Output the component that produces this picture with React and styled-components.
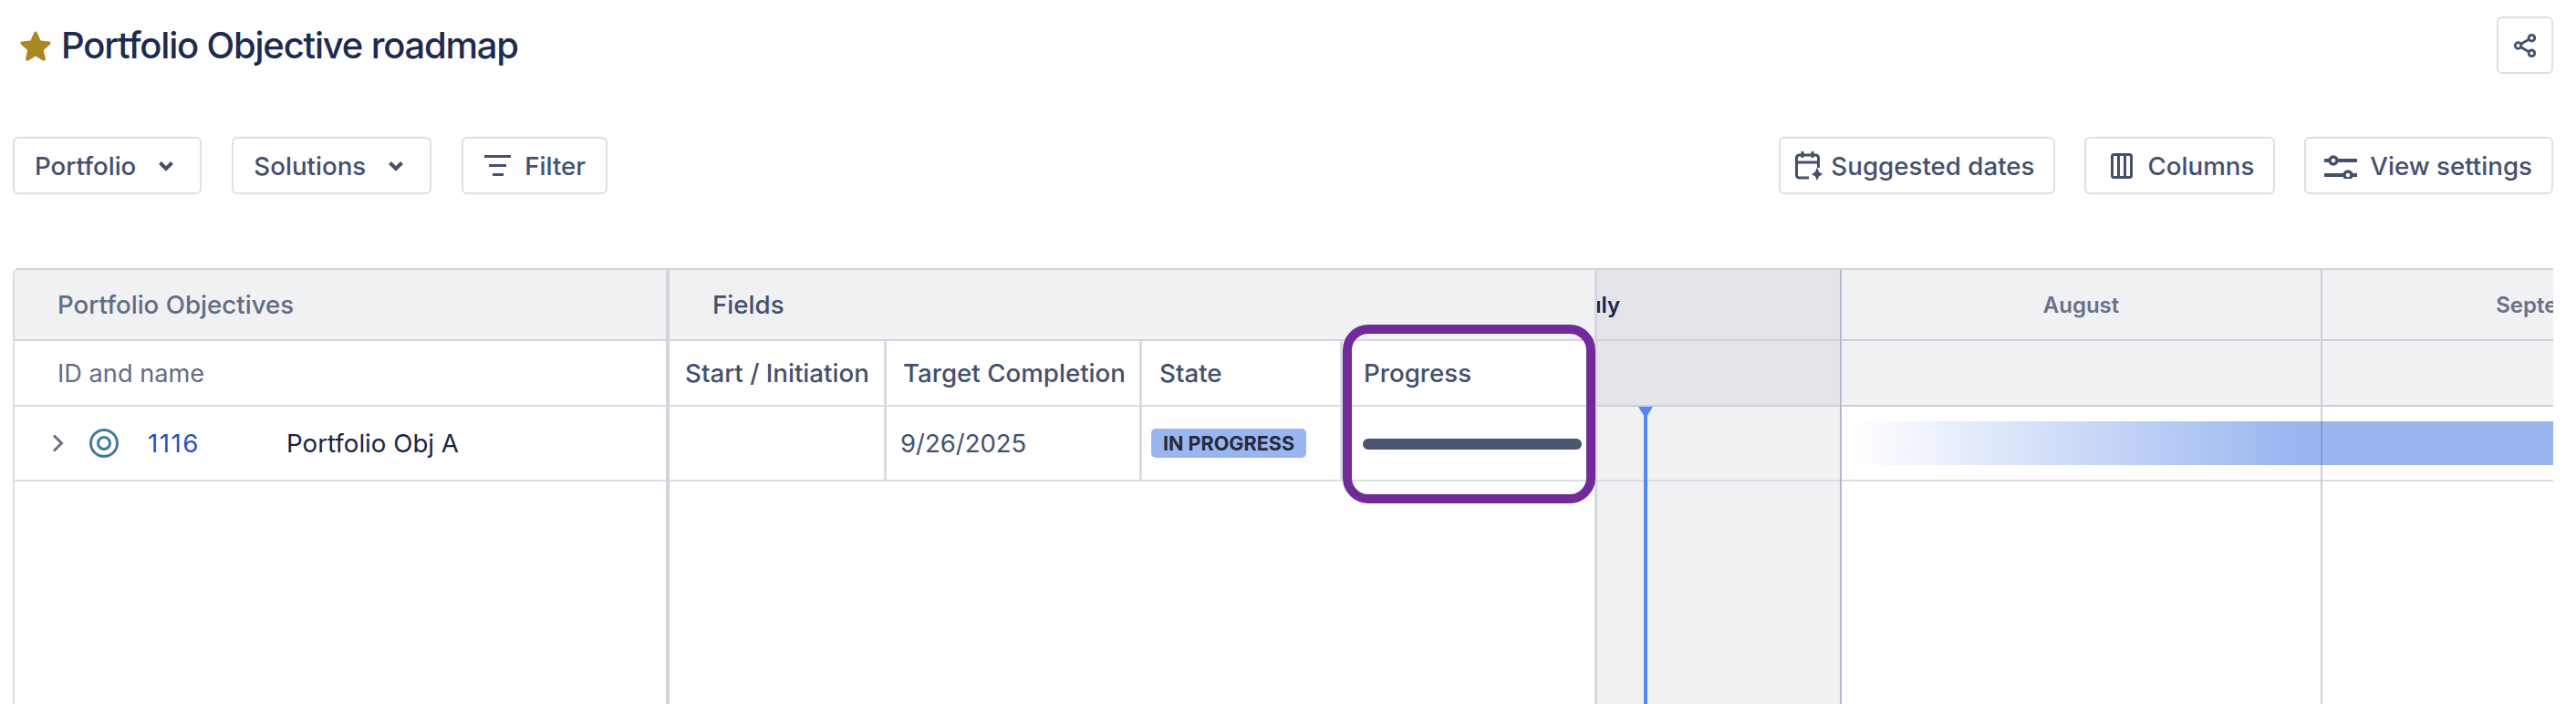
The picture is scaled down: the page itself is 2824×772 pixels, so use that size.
import React from "react";
import styled, { createGlobalStyle } from "styled-components";

const GlobalStyle = createGlobalStyle`
  html, body {
    margin: 0;
    padding: 0;
    background: #fff;
  }
  body {
    font-family: Inter, "Liberation Sans", sans-serif;
    color: #44506c;
  }
`;

// Icons
const StarIcon = () => (
  <svg width="34" height="33" viewBox="0 0 34 33">
    <path
      d="M17 .5c.8 0 1.400.5 1.700 1.200l3.800 8.900 9.500.9c1.600.2 2.200 2.100 1 3.200l-7.200 6.400 2.100 9.300c.4 1.600-1.300 2.800-2.700 2l-8.200-4.900-8.200 4.900c-1.400.8-3.100-.4-2.700-2l2.100-9.300-7.200-6.400c-1.200-1.100-.6-3 1-3.200l9.500-.9 3.800-8.900c.3-.7.900-1.200 1.700-1.200z"
      fill="#ab8821"
    />
  </svg>
);

const ShareIcon = () => (
  <svg width="26" height="28" viewBox="0 0 28 30" fill="none" stroke="#44506c" strokeWidth="3">
    <circle cx="22" cy="6" r="3.6" />
    <circle cx="6" cy="15" r="3.600" />
    <circle cx="22" cy="24" r="3.6" />
    <path d="M9.200 13.200 18.800 7.800M9.200 16.800l9.600 5.400" />
  </svg>
);

const ChevronDown = () => (
  <svg width="18" height="14" viewBox="0 0 18 14" fill="none" stroke="#44506c" strokeWidth="4">
    <path d="M2.500 3.500 9 10l6.500-6.500" />
  </svg>
);

const FilterIcon = () => (
  <svg width="29" height="24" viewBox="0 0 29 24" fill="#44506c">
    <rect x="0" y="0" width="29" height="3" />
    <rect x="5" y="10" width="19" height="3" />
    <rect x="9" y="20" width="12" height="3" />
  </svg>
);

const CalendarIcon = () => (
  <svg width="30" height="32" viewBox="0 0 30 32" fill="none" stroke="#44506c" strokeWidth="3">
    <path d="M15 29H4.500a3 3 0 0 1-3-3V7a3 3 0 0 1 3-3h18a3 3 0 0 1 3 3v11" />
    <path d="M1.500 12h24M8 0v7M19 0v7" />
    <path d="M24 17.500l2 5 4 2.500-4 2.500-2 4.500-2-4.500-4-2.500 4-2.500z" fill="#44506c" stroke="none" />
  </svg>
);

const ColumnsIcon = () => (
  <svg width="24" height="28" viewBox="0 0 24 28" fill="none" stroke="#44506c" strokeWidth="3">
    <rect x="1.500" y="1.500" width="21" height="25" rx="2" />
    <path d="M8.500 1.500v25M15.500 1.500v25" />
  </svg>
);

const SlidersIcon = () => (
  <svg width="36" height="28" viewBox="0 0 36 28" fill="none" stroke="#44506c" strokeWidth="4">
    <path d="M0 8h36M0 24h36" />
    <circle cx="10" cy="8" r="4" fill="#fff" strokeWidth="3.500" />
    <circle cx="26" cy="24" r="4" fill="#fff" strokeWidth="3.500" />
  </svg>
);

const TargetIcon = () => (
  <svg width="32" height="32" viewBox="0 0 32 32" fill="none" stroke="#3f7d9c" strokeWidth="3">
    <circle cx="16" cy="16" r="14.500" />
    <circle cx="16" cy="16" r="6.500" />
  </svg>
);

const ChevronRight = () => (
  <svg width="13" height="20" viewBox="0 0 13 20" fill="none" stroke="#6b7088" strokeWidth="3">
    <path d="M2 1.500 10.500 10 2 18.500" />
  </svg>
);

const MONTHS = [
  { name: "July", width: 533, current: true },
  { name: "August", width: 527 },
  { name: "September", width: 510 },
];

export default function App() {
  return (
    <Page>
      <GlobalStyle />
      <TitleRow>
        <TitleGroup>
          <StarIcon />
          <Title>Portfolio Objective roadmap</Title>
        </TitleGroup>
        <IconButton aria-label="Share">
          <ShareIcon />
        </IconButton>
      </TitleRow>

      <Toolbar>
        <ToolGroup>
          <Button $pad="0 28px 0 22px" $gap={24}>
            Portfolio
            <ChevronDown />
          </Button>
          <Button $pad="0 28px 0 22px" $gap={24}>
            Solutions
            <ChevronDown />
          </Button>
          <Button $pad="0 22px 0 23px" $gap={15}>
            <FilterIcon />
            Filter
          </Button>
        </ToolGroup>
        <ToolGroup $tight>
          <Button $pad="0 21px 0 16px" $gap={9}>
            <CalendarIcon />
            Suggested dates
          </Button>
          <Button $pad="0 21px 0 27px" $gap={16}>
            <ColumnsIcon />
            Columns
          </Button>
          <Button $pad="0 21px 0 20px" $gap={14}>
            <SlidersIcon />
            View settings
          </Button>
        </ToolGroup>
      </Toolbar>

      <Table>
        <ObjectivesPane>
          <GroupHead>
            <GroupLabel $muted>Portfolio Objectives</GroupLabel>
          </GroupHead>
          <ColumnRow>
            <NameHead>ID and name</NameHead>
          </ColumnRow>
          <DataRow>
            <NameCell>
              <ChevronRight />
              <TargetIcon />
              <IssueLink>1116</IssueLink>
              <IssueName>Portfolio Obj A</IssueName>
            </NameCell>
          </DataRow>
        </ObjectivesPane>

        <FieldsPane>
          <GroupHead>
            <GroupLabel>Fields</GroupLabel>
          </GroupHead>
          <ColumnRow>
            <FieldHead $width={238} $pad={17}>Start / Initiation</FieldHead>
            <FieldHead $width={280} $pad={18}>Target Completion</FieldHead>
            <FieldHead $width={220} $pad={19}>State</FieldHead>
            <FieldHead $pad={23} $last>Progress</FieldHead>
          </ColumnRow>
          <DataRow>
            <FieldCell $width={238} $pad={17} />
            <FieldCell $width={280} $pad={15}>9/26/2025</FieldCell>
            <FieldCell $width={220} $pad={10}>
              <StateBadge>IN PROGRESS</StateBadge>
            </FieldCell>
            <FieldCell $pad={22} $last>
              <ProgressTrack />
            </FieldCell>
          </DataRow>
        </FieldsPane>

        <Timeline>
          <Months>
            {MONTHS.map((m) => (
              <MonthColumn key={m.name} $width={m.width} $current={m.current}>
                <MonthHead $current={m.current}>{m.name}</MonthHead>
                <MonthBlank $current={m.current} />
                <MonthRow />
              </MonthColumn>
            ))}
          </Months>
          <RoadmapBar />
          <TodayMarker />
        </Timeline>

        <Highlight />
      </Table>
    </Page>
  );
}

const Page = styled.div`
  box-sizing: border-box;
  width: 2824px;
  height: 772px;
  overflow: hidden;
  padding: 18px 25px 0 14px;
  display: flex;
  flex-direction: column;
`;
const TitleRow = styled.div`
  display: flex;
  justify-content: space-between;
  align-items: flex-start;
  height: 63px;
  flex: none;
`;
const TitleGroup = styled.div`
  display: flex;
  align-items: center;
  gap: 11px;
  height: 64px;
  padding-left: 8px;
`;
const Title = styled.h1`
  margin: 0;
  font-size: 40px;
  font-weight: 500;
  line-height: 64px;
  letter-spacing: -1.200px;
  color: #1c2b4f;
`;
const IconButton = styled.button`
  box-sizing: border-box;
  width: 62px;
  height: 63px;
  padding: 0;
  display: flex;
  align-items: center;
  justify-content: center;
  background: #fff;
  border: 2px solid #dfe0e6;
  border-radius: 6px;
`;
const Toolbar = styled.div`
  display: flex;
  justify-content: space-between;
  align-items: center;
  margin-top: 69px;
  flex: none;
`;
const ToolGroup = styled.div`
  display: flex;
  gap: ${(p) => (p.$tight ? 32 : 33)}px;
`;
const Button = styled.button`
  box-sizing: border-box;
  height: 63px;
  padding: ${(p) => p.$pad};
  display: flex;
  align-items: center;
  gap: ${(p) => p.$gap}px;
  background: #fff;
  border: 2px solid #dfe0e6;
  border-radius: 6px;
  font-family: Inter, "Liberation Sans", sans-serif;
  font-size: 27.700px;
  font-weight: 500;
  white-space: nowrap;
  color: #44506c;
`;
const Table = styled.div`
  position: relative;
  display: flex;
  flex: 1;
  min-height: 0;
  margin-top: 81px;
  border-top: 2px solid #d2d4dc;
  border-left: 2px solid #dcdde3;
  border-top-left-radius: 6px;
  overflow: hidden;
`;
const ObjectivesPane = styled.div`
  flex: none;
  width: 718px;
  box-sizing: border-box;
  border-right: 4px solid #d2d3db;
`;
const FieldsPane = styled.div`
  flex: none;
  width: 1017px;
  box-sizing: border-box;
  border-right: 3px solid #d5d6de;
`;
const GroupHead = styled.div`
  box-sizing: border-box;
  height: 78px;
  padding-left: 47px;
  display: flex;
  align-items: center;
  background: #f0f1f3;
  border-bottom: 2px solid #d4d5dc;
`;
const GroupLabel = styled.span`
  font-size: 27.700px;
  font-weight: 500;
  color: ${(p) => (p.$muted ? "#626c85" : "#44506c")};
`;
const ColumnRow = styled.div`
  box-sizing: border-box;
  height: 72px;
  display: flex;
  border-bottom: 2px solid #dcdde3;
`;
const DataRow = styled.div`
  box-sizing: border-box;
  height: 82px;
  display: flex;
  border-bottom: 2px solid #dcdde3;
`;
const NameHead = styled.div`
  padding-left: 47px;
  display: flex;
  align-items: center;
  font-size: 27.200px;
  color: #626c85;
`;
const NameCell = styled.div`
  display: flex;
  align-items: center;
  padding-left: 41px;
  gap: 28px;
`;
const IssueLink = styled.span`
  font-size: 27.700px;
  letter-spacing: 1.500px;
  color: #2350c8;
  width: 124px;
  margin-left: 4px;
`;
const IssueName = styled.span`
  font-size: 27.700px;
  color: #172549;
`;
const FieldHead = styled.div`
  box-sizing: border-box;
  ${(p) => (p.$width ? `width: ${p.$width}px;` : "flex: 1;")}
  padding-left: ${(p) => p.$pad}px;
  display: flex;
  align-items: center;
  font-size: 27.700px;
  font-weight: 500;
  white-space: nowrap;
  color: #44506c;
  ${(p) => (p.$last ? "" : "border-right: 3px solid #dcdde3;")}
`;
const FieldCell = styled.div`
  box-sizing: border-box;
  ${(p) => (p.$width ? `width: ${p.$width}px;` : "flex: 1;")}
  padding-left: ${(p) => p.$pad}px;
  padding-right: ${(p) => (p.$last ? "14px" : "0")};
  display: flex;
  align-items: center;
  font-size: 27.500px;
  color: #44506c;
  ${(p) => (p.$last ? "" : "border-right: 3px solid #dcdde3;")}
`;
const StateBadge = styled.span`
  box-sizing: border-box;
  width: 170px;
  height: 32px;
  display: flex;
  align-items: center;
  justify-content: center;
  background: #9ab6f0;
  border-radius: 5px;
  font-size: 21.600px;
  font-weight: 700;
  color: #242a3c;
`;
const ProgressTrack = styled.div`
  width: 100%;
  height: 12px;
  margin-top: 1px;
  border-radius: 6px;
  background: #4a556f;
`;
const Timeline = styled.div`
  position: relative;
  flex: 1;
  min-width: 0;
  overflow: hidden;
`;
const Months = styled.div`
  display: flex;
  height: 100%;
  margin-left: -265px;
`;
const MonthColumn = styled.div`
  position: relative;
  z-index: 1;
  flex: none;
  box-sizing: border-box;
  width: ${(p) => p.$width}px;
  border-right: 2px solid ${(p) => (p.$current ? "#b5b8ca" : "rgba(90, 95, 140, 0.3)")};
  background: ${(p) => (p.$current ? "#f0f1f3" : "transparent")};
`;
const MonthHead = styled.div`
  box-sizing: border-box;
  height: 78px;
  display: flex;
  align-items: center;
  justify-content: center;
  background: ${(p) => (p.$current ? "#e4e5e9" : "#f0f1f3")};
  border-bottom: 2px solid #cdced6;
  font-size: 24px;
  font-weight: 600;
  color: ${(p) => (p.$current ? "#172549" : "#69718a")};
`;
const MonthBlank = styled.div`
  box-sizing: border-box;
  height: 72px;
  background: ${(p) => (p.$current ? "#e4e5e9" : "#f0f1f3")};
  border-bottom: 2px solid #cdced6;
`;
const MonthRow = styled.div`
  box-sizing: border-box;
  height: 82px;
  border-bottom: 2px solid #dcdde3;
`;
// gantt items sit on the timeline canvas
const RoadmapBar = styled.div`
  position: absolute;
  left: 281px;
  top: 166px;
  width: 800px;
  height: 48px;
  background: linear-gradient(90deg, rgba(154, 182, 240, 0) 0, #9ab6f0 484px);
`;
const TodayMarker = styled.div`
  position: absolute;
  z-index: 2;
  left: 51px;
  top: 150px;
  bottom: 0;
  width: 4px;
  background: #5588f7;
  &::before {
    content: "";
    position: absolute;
    left: -6px;
    top: 0;
    border-left: 8px solid transparent;
    border-right: 8px solid transparent;
    border-top: 13px solid #5588f7;
  }
`;
// annotation drawn over the table
const Highlight = styled.div`
  position: absolute;
  z-index: 3;
  left: 1456px;
  top: 60px;
  box-sizing: border-box;
  width: 277px;
  height: 196px;
  border: 10px solid #702b98;
  border-radius: 28px;
`;
